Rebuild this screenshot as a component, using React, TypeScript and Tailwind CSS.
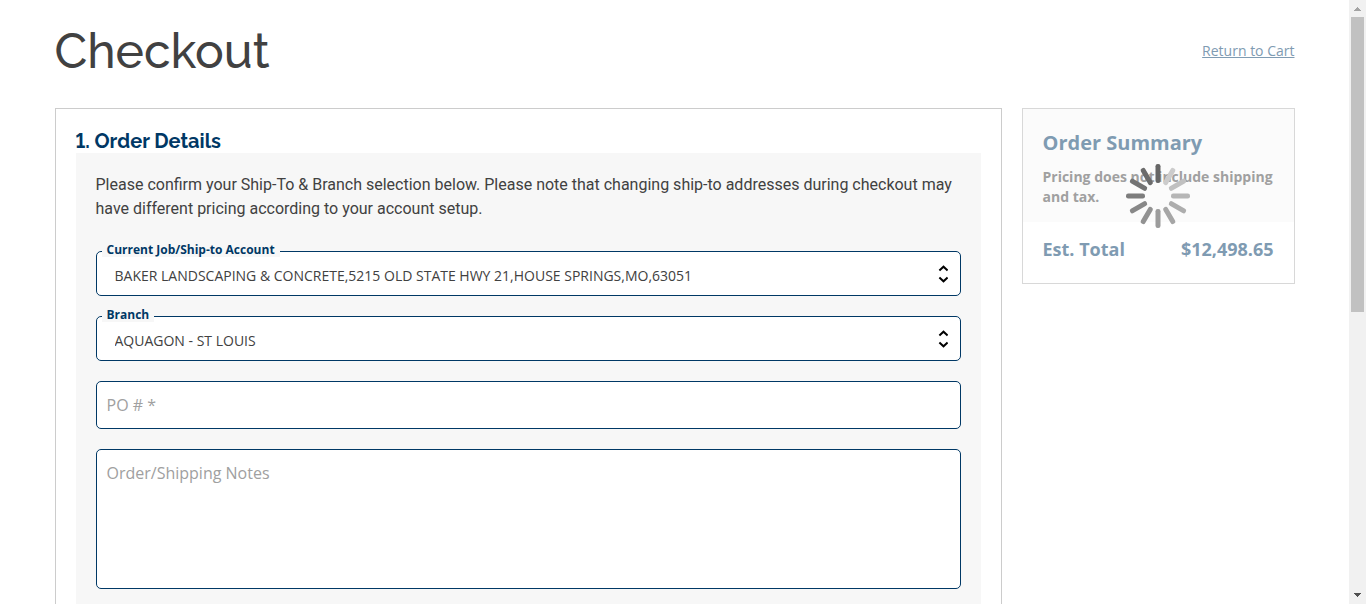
import React from 'react';

const SPOKES = [
  '#666666', '#cccccc', '#c0c0c0', '#b6b6b6', '#adadad', '#a6a6a6',
  '#9c9c9c', '#929292', '#888888', '#7d7d7d', '#737373', '#6b6b6b',
];

function Spinner() {
  return (
    <svg role="img" aria-label="Loading" viewBox="0 0 64 64" className="size-16">
      {SPOKES.map((color, i) => (
        <rect key={color} x="29.5" y="0" width="5" height="19" rx="2.2" fill={color} transform={`rotate(${i * 30} 32 32)`} />
      ))}
    </svg>
  );
}

function UpDown() {
  return (
    <svg viewBox="0 0 10 18" fill="none" stroke="#000" strokeWidth="2" className="pointer-events-none absolute top-[14px] right-[13px] h-[18px] w-[10px]" aria-hidden="true">
      <path d="M1.4 5.4 5.5 1.7 9.6 5.4" />
      <path d="M1.4 12.6 5.5 16.3 9.6 12.6" />
    </svg>
  );
}

function SelectField({ id, label, value }: { id: string; label: string; value: string }) {
  return (
    <div className="relative">
      <label htmlFor={id} className="absolute -top-[9px] left-[6px] bg-[#f7f7f7] px-[5px] text-[12px] leading-[15px] font-bold text-[#003865]">
        {label}
      </label>
      <select id={id} className="block h-[45px] w-full appearance-none rounded-[5px] border border-[#003865] bg-white pt-1 pr-8 pl-[18px] text-[14px] text-[#414141]">
        <option>{value}</option>
      </select>
      <UpDown />
    </div>
  );
}

function ScrollRail() {
  return (
    <div className="flex w-[17px] shrink-0 flex-col items-center bg-[#f1f1f1]" aria-hidden="true">
      <svg viewBox="0 0 17 17" className="h-[17px] w-[17px] shrink-0" shapeRendering="crispEdges">
        <path d="M5 11h7v-1h-1V9h-1V8H9V7H8v1H7v1H6v1H5z" fill="#a3a3a3" />
      </svg>
      <div className="flex w-[13px] flex-1 flex-col">
        <div className="h-[51.8%] bg-[#c1c1c1]" />
      </div>
      <svg viewBox="0 0 17 17" className="h-[17px] w-[17px] shrink-0" shapeRendering="crispEdges">
        <path d="M5 6h7v1h-1v1h-1v1H9v1H8V9H7V8H6V7H5z" fill="#505050" />
      </svg>
    </div>
  );
}

export default function App() {
  return (
    <div className="flex h-screen bg-white font-['Open_Sans','Noto_Sans',sans-serif] text-[#414141]">
      <div className="min-w-0 flex-1 overflow-y-auto px-4 [scrollbar-width:none]">
        <div className="mx-auto max-w-[1240px]">
          <header className="flex h-[108px] items-center justify-between pb-[6px]">
            <h1 className="font-[Raleway,Lato,sans-serif] text-[48px] leading-[58px] font-medium">Checkout</h1>
            <a href="#cart" className="text-[14px] leading-5 text-[#7f9bb2] underline">Return to Cart</a>
          </header>
          <div className="flex items-start gap-5">
            <main className="min-w-0 flex-1 border border-[#cccccc] p-5">
              <h2 className="font-[Raleway,Lato,sans-serif] text-[20px] leading-6 font-bold text-[#003865] lining-nums">1. Order Details</h2>
              <form className="flex flex-col gap-5 bg-[#f7f7f7] p-5">
                <p className="pb-[10px] font-[Roboto,sans-serif] text-[16px] leading-6">
                  Please confirm your Ship-To &amp; Branch selection below. Please note that changing ship-to addresses during checkout may have different pricing according to your account setup.
                </p>
                <SelectField id="account" label="Current Job/Ship-to Account" value="BAKER LANDSCAPING & CONCRETE,5215 OLD STATE HWY 21,HOUSE SPRINGS,MO,63051" />
                <SelectField id="branch" label="Branch" value="AQUAGON - ST LOUIS" />
                <input aria-label="PO # *" placeholder="PO # *" className="block h-12 w-full rounded-[5px] border border-[#003865] bg-white px-[10px] text-[16px] placeholder:text-[#a0a0a0]" />
                <textarea aria-label="Order/Shipping Notes" placeholder="Order/Shipping Notes" className="block h-[140px] w-full resize-none rounded-[5px] border border-[#003865] bg-white px-[10px] py-[11px] text-[16px] leading-6 placeholder:text-[#a0a0a0]" />
              </form>
            </main>
            <aside className="relative w-[273px] shrink-0 border border-[#d8d8d8]">
              <div className="bg-[#fbfbfb] px-5 pt-5 pb-[15px]">
                <h2 className="pb-[10px] text-[20px] leading-7 font-bold text-[#7f9bb2]">Order Summary</h2>
                <p className="text-[14px] leading-5 font-bold text-[#a0a0a0]">Pricing does not include shipping and tax.</p>
              </div>
              <div className="flex justify-between px-5 pt-[14px] pb-5 text-[18px] leading-[27px] font-bold text-[#7f9bb2]">
                <span>Est. Total</span>
                <span>$12,498.65</span>
              </div>
              <div className="absolute inset-0 flex items-center justify-center">
                <Spinner />
              </div>
            </aside>
          </div>
        </div>
      </div>
      <ScrollRail />
    </div>
  );
}
